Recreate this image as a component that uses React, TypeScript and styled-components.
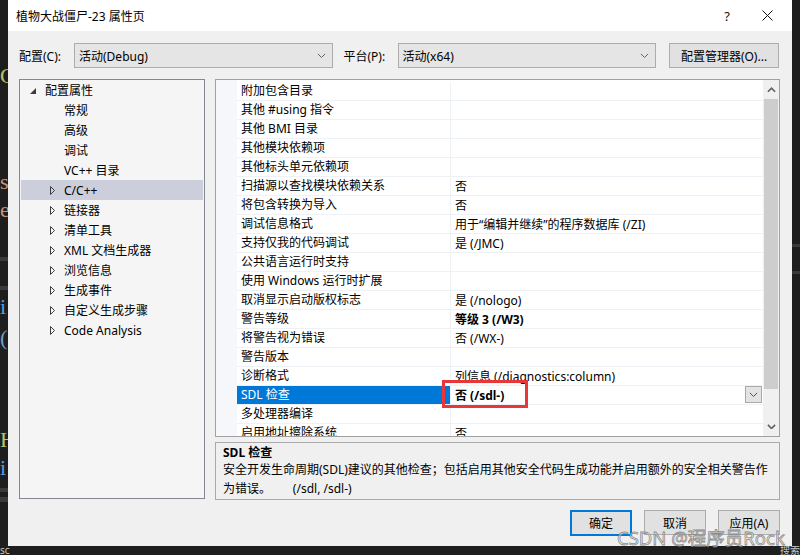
import React from 'react';
import styled, { createGlobalStyle } from 'styled-components';

const GlobalStyle = createGlobalStyle`
  * { box-sizing: border-box; }
  body {
    margin: 0;
    background: #1e1e1e;
    font-family: "Noto Sans", "Noto Sans CJK SC", sans-serif;
    font-size: 12px;
    color: #000;
  }
`;

const Screen = styled.div`
  position: relative;
  width: 800px;
  height: 555px;
  display: flex;
  flex-direction: column;
  overflow: hidden;
`;

const Middle = styled.div`
  display: flex;
  height: 546px;
`;

const EditorEdge = styled.div`
  width: 8px;
  background: #1e1e1e;
  overflow: hidden;
  display: flex;
  flex-direction: column;
  font-family: "Liberation Serif", serif;
  font-size: 22px;
`;

const CodeLine = styled.div<{ $h: number; $color?: string; $bar?: boolean }>`
  height: ${p => p.$h}px;
  line-height: ${p => p.$h}px;
  flex-shrink: 0;
  color: ${p => p.$color || 'transparent'};
  background: ${p => (p.$bar ? '#3a3a3a' : 'transparent')};
  white-space: nowrap;
`;

const BottomBar = styled.div`
  height: 9px;
  background: #1e1e1e;
  display: flex;
  justify-content: space-between;
  color: #c8c8c8;
  font-size: 10px;
  line-height: 9px;
  overflow: hidden;
`;

const Dialog = styled.div`
  width: 784px;
  background: #f0f0f0;
  display: flex;
  flex-direction: column;
`;

const TitleBar = styled.div`
  height: 31px;
  background: #fff;
  display: flex;
  align-items: center;
  padding-left: 8px;
`;

const Title = styled.div`
  flex: 1;
  font-size: 12px;
`;

const TitleButton = styled.div`
  width: 40px;
  height: 31px;
  display: flex;
  align-items: center;
  justify-content: center;
  font-size: 13px;
  color: #111;
`;

const Toolbar = styled.div`
  display: flex;
  align-items: center;
  height: 25px;
  margin-top: 12px;
  padding: 0 13px 0 11px;
`;

const Label = styled.div<{ $w: number }>`
  width: ${p => p.$w}px;
  flex-shrink: 0;
`;

const Combo = styled.div<{ $w: number }>`
  width: ${p => p.$w}px;
  height: 25px;
  background: #e5e5e5;
  border: 1px solid #acacac;
  display: flex;
  align-items: center;
  justify-content: space-between;
  padding: 0 6px 0 4px;
  margin-right: 11px;
`;

const Button = styled.div<{ $w: number; $default?: boolean }>`
  width: ${p => p.$w}px;
  height: ${p => (p.$default ? 26 : 25)}px;
  background: #e1e1e1;
  border: ${p => (p.$default ? '2px solid #0078d7' : '1px solid #adadad')};
  display: flex;
  align-items: center;
  justify-content: center;
  flex-shrink: 0;
`;

const Body = styled.div`
  display: flex;
  gap: 10px;
  height: 421px;
  margin-top: 11px;
  padding-left: 11px;
`;

const Tree = styled.div`
  width: 186px;
  height: 420px;
  border: 1px solid #828790;
  background: #f5f5f5;
`;

const TreeRow = styled.div<{ $level: number; $selected?: boolean }>`
  height: 20px;
  margin: 0 1px;
  display: flex;
  align-items: center;
  padding-left: ${p => 7 + p.$level * 19}px;
  background: ${p => (p.$selected ? '#cccedb' : 'transparent')};
  white-space: nowrap;
`;

const Expander = styled.span`
  width: 12px;
  height: 12px;
  margin-right: 5px;
  display: flex;
  flex-shrink: 0;
`;

const RightColumn = styled.div`
  width: 565px;
  display: flex;
  flex-direction: column;
  gap: 5px;
`;

const GridBox = styled.div`
  position: relative;
  height: 358px;
  border: 1px solid #a0a0a0;
  background: #fff;
  display: flex;
`;

const Rows = styled.div`
  flex: 1;
  overflow: hidden;
  padding-top: 2px;
  background: linear-gradient(to right, #f5f7fa 21px, #fff 21px);
`;

const PropRow = styled.div`
  display: grid;
  grid-template-columns: 21px 214px 1fr;
  height: 19px;
`;

const Gutter = styled.div`
  background: #f5f7fa;
`;

const NameCell = styled.div<{ $selected?: boolean }>`
  padding-left: 4px;
  line-height: 18px;
  border-bottom: 1px solid #eef1f6;
  border-right: 1px solid #eef1f6;
  background: ${p => (p.$selected ? '#0078d7' : 'transparent')};
  color: ${p => (p.$selected ? '#fff' : '#000')};
  white-space: nowrap;
  overflow: hidden;
`;

const ValueCell = styled.div<{ $bold?: boolean }>`
  display: flex;
  align-items: center;
  height: 19px;
  padding: 0 1px 1px 4px;
  border-bottom: 1px solid #eef1f6;
  font-weight: ${p => (p.$bold ? 700 : 400)};
  white-space: nowrap;
`;

const DropButton = styled.div`
  margin-left: auto;
  width: 17px;
  height: 17px;
  background: #e3e3e3;
  border: 1px solid #a9a9a9;
  display: flex;
  align-items: center;
  justify-content: center;
`;

const ScrollBar = styled.div`
  width: 16px;
  background: #f0f0f0;
  display: flex;
  flex-direction: column;
`;

const ScrollArrow = styled.div`
  height: 19px;
  display: flex;
  align-items: center;
  justify-content: center;
`;

const Thumb = styled.div`
  height: 290px;
  margin: 0 1px;
  background: #cdcdcd;
`;

const ScrollTrack = styled.div`
  flex: 1;
`;

const Highlight = styled.div`
  position: absolute;
  left: 226px;
  top: 300px;
  width: 86px;
  height: 28px;
  border: 3px solid #e8373b;
  pointer-events: none;
`;

const Description = styled.div`
  height: 58px;
  border: 1px solid #a9a9a9;
  background: #f0f0f0;
  padding: 1px 7px 0;
`;

const DescTitle = styled.div`
  font-weight: 700;
  line-height: 17px;
`;

const DescLine = styled.div`
  line-height: 18.5px;
  white-space: nowrap;
`;

const Footer = styled.div`
  display: flex;
  justify-content: flex-end;
  gap: 12px;
  margin-top: 10px;
  padding-right: 12px;
`;

const Watermark = styled.div`
  position: absolute;
  left: 617px;
  top: 524px;
  font-size: 18.5px;
  color: rgba(240, 240, 240, 0.6);
  -webkit-text-stroke: 0.8px rgba(120, 120, 120, 0.85);
  white-space: nowrap;
  pointer-events: none;
`;

const Chevron = ({ size = 9, color = '#555', weight = 1 }: { size?: number; color?: string; weight?: number }) => (
  <svg width={size} height={size * 0.6} viewBox="0 0 10 6">
    <polyline points="1,1 5,5 9,1" fill="none" stroke={color} strokeWidth={weight} />
  </svg>
);

const ChevronUp = () => (
  <svg width="9" height="6" viewBox="0 0 10 6">
    <polyline points="1,5 5,1 9,5" fill="none" stroke="#606060" strokeWidth="1.8" />
  </svg>
);

const CloseIcon = () => (
  <svg width="11" height="11" viewBox="0 0 11 11">
    <path d="M0.5 0.5 L10.5 10.5 M10.5 0.5 L0.5 10.5" stroke="#111" strokeWidth="1" />
  </svg>
);

const ExpandedArrow = () => (
  <svg width="12" height="12" viewBox="0 0 12 12">
    <polygon points="8,4 8,10 2,10" fill="#3c3c3c" />
  </svg>
);

const CollapsedArrow = () => (
  <svg width="12" height="12" viewBox="0 0 12 12">
    <polygon points="3.5,2.5 7.5,6.5 3.5,10.5" fill="none" stroke="#3c3c3c" strokeWidth="1" />
  </svg>
);

type TreeItem = { label: string; level: number; kind: 'open' | 'closed' | 'leaf'; selected?: boolean };

const treeItems: TreeItem[] = [
  { label: '配置属性', level: 0, kind: 'open' },
  { label: '常规', level: 1, kind: 'leaf' },
  { label: '高级', level: 1, kind: 'leaf' },
  { label: '调试', level: 1, kind: 'leaf' },
  { label: 'VC++ 目录', level: 1, kind: 'leaf' },
  { label: 'C/C++', level: 1, kind: 'closed', selected: true },
  { label: '链接器', level: 1, kind: 'closed' },
  { label: '清单工具', level: 1, kind: 'closed' },
  { label: 'XML 文档生成器', level: 1, kind: 'closed' },
  { label: '浏览信息', level: 1, kind: 'closed' },
  { label: '生成事件', level: 1, kind: 'closed' },
  { label: '自定义生成步骤', level: 1, kind: 'closed' },
  { label: 'Code Analysis', level: 1, kind: 'closed' },
];

type Prop = { name: string; value: string; bold?: boolean; selected?: boolean };

const props: Prop[] = [
  { name: '附加包含目录', value: '' },
  { name: '其他 #using 指令', value: '' },
  { name: '其他 BMI 目录', value: '' },
  { name: '其他模块依赖项', value: '' },
  { name: '其他标头单元依赖项', value: '' },
  { name: '扫描源以查找模块依赖关系', value: '否' },
  { name: '将包含转换为导入', value: '否' },
  { name: '调试信息格式', value: '用于“编辑并继续”的程序数据库 (/ZI)' },
  { name: '支持仅我的代码调试', value: '是 (/JMC)' },
  { name: '公共语言运行时支持', value: '' },
  { name: '使用 Windows 运行时扩展', value: '' },
  { name: '取消显示启动版权标志', value: '是 (/nologo)' },
  { name: '警告等级', value: '等级 3 (/W3)', bold: true },
  { name: '将警告视为错误', value: '否 (/WX-)' },
  { name: '警告版本', value: '' },
  { name: '诊断格式', value: '列信息 (/diagnostics:column)' },
  { name: 'SDL 检查', value: '否 (/sdl-)', bold: true, selected: true },
  { name: '多处理器编译', value: '' },
  { name: '启用地址擦除系统', value: '否' },
];

const leftCode: { h: number; t?: string; c?: string; bar?: boolean }[] = [
  { h: 66 },
  { h: 20, t: 'C', c: '#b5c46a' },
  { h: 86 },
  { h: 20, t: 's', c: '#ce9178' },
  { h: 8 },
  { h: 20, t: 'e', c: '#ce9178' },
  { h: 37 },
  { h: 4, bar: true },
  { h: 25 },
  { h: 4, bar: true },
  { h: 7 },
  { h: 20, t: 'i', c: '#4f9fe0' },
  { h: 11 },
  { h: 20, t: '(', c: '#6a9fd0' },
  { h: 82 },
  { h: 20, t: 'H', c: '#b5c46a' },
  { h: 8 },
  { h: 20, t: 'i', c: '#4f9fe0' },
  { h: 10 },
  { h: 4, bar: true },
  { h: 5 },
  { h: 5, bar: true },
];

const rightCode: { h: number; bar?: boolean }[] = [
  { h: 244 },
  { h: 3, bar: true },
  { h: 24 },
  { h: 3, bar: true },
];

export default function App() {
  return (
    <>
      <GlobalStyle />
      <Screen>
        <Middle>
          <EditorEdge>
            {leftCode.map((l, i) => (
              <CodeLine key={i} $h={l.h} $color={l.c} $bar={l.bar}>
                {l.t}
              </CodeLine>
            ))}
          </EditorEdge>
          <Dialog>
            <TitleBar>
              <Title>植物大战僵尸-23 属性页</Title>
              <TitleButton>?</TitleButton>
              <TitleButton style={{ marginRight: 5 }}>
                <CloseIcon />
              </TitleButton>
            </TitleBar>

            <Toolbar>
              <Label $w={55}>配置(C):</Label>
              <Combo $w={259}>
                <span>活动(Debug)</span>
                <Chevron />
              </Combo>
              <Label $w={54}>平台(P):</Label>
              <Combo $w={259}>
                <span>活动(x64)</span>
                <Chevron />
              </Combo>
              <Button $w={110} style={{ marginLeft: 2 }}>配置管理器(O)...</Button>
            </Toolbar>

            <Body>
              <Tree>
                {treeItems.map(item => (
                  <TreeRow key={item.label} $level={item.level} $selected={item.selected}>
                    <Expander>
                      {item.kind === 'open' && <ExpandedArrow />}
                      {item.kind === 'closed' && <CollapsedArrow />}
                    </Expander>
                    {item.label}
                  </TreeRow>
                ))}
              </Tree>

              <RightColumn>
                <GridBox>
                  <Rows>
                    {props.map(p => (
                      <PropRow key={p.name}>
                        <Gutter />
                        <NameCell $selected={p.selected}>{p.name}</NameCell>
                        <ValueCell $bold={p.bold}>
                          {p.value}
                          {p.selected && (
                            <DropButton>
                              <Chevron size={9} color="#444" />
                            </DropButton>
                          )}
                        </ValueCell>
                      </PropRow>
                    ))}
                  </Rows>
                  <ScrollBar>
                    <ScrollArrow>
                      <ChevronUp />
                    </ScrollArrow>
                    <Thumb />
                    <ScrollTrack />
                    <ScrollArrow>
                      <Chevron size={9} color="#606060" weight={1.8} />
                    </ScrollArrow>
                  </ScrollBar>
                  <Highlight />
                </GridBox>

                <Description>
                  <DescTitle>SDL 检查</DescTitle>
                  <DescLine>安全开发生命周期(SDL)建议的其他检查；包括启用其他安全代码生成功能并启用额外的安全相关警告作</DescLine>
                  <DescLine>为错误。&nbsp;&nbsp;&nbsp;&nbsp;&nbsp;&nbsp;&nbsp;(/sdl, /sdl-)</DescLine>
                </Description>
              </RightColumn>
            </Body>

            <Footer>
              <Button $w={62} $default>确定</Button>
              <Button $w={62}>取消</Button>
              <Button $w={62}>应用(A)</Button>
            </Footer>
          </Dialog>
          <EditorEdge>
            {rightCode.map((l, i) => (
              <CodeLine key={i} $h={l.h} $bar={l.bar} />
            ))}
          </EditorEdge>
        </Middle>
        <BottomBar>
          <span>sc</span>
          <span>搜索</span>
        </BottomBar>
        <Watermark>CSDN @程序员Rock</Watermark>
      </Screen>
    </>
  );
}
